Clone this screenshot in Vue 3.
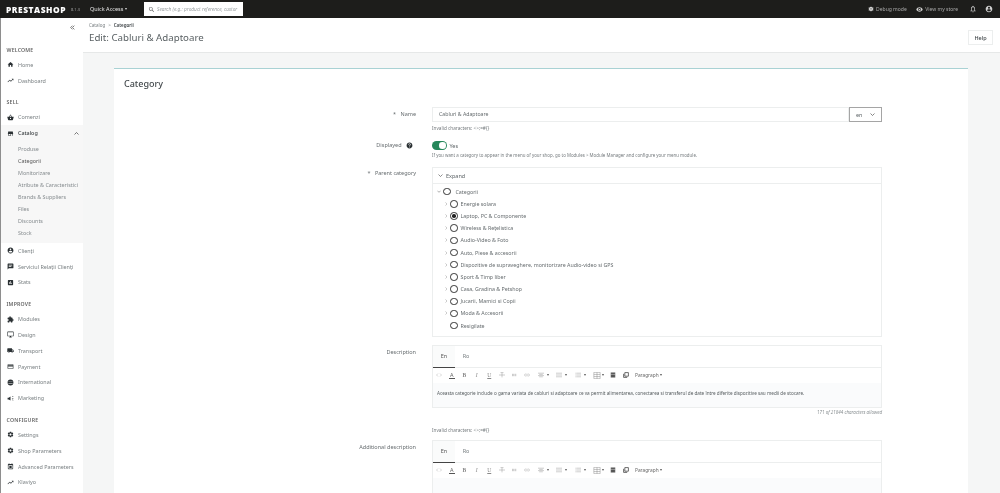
<script setup>
const P = {
  home: 'M10 20v-6h4v6h5v-8h3L12 3 2 12h3v8z',
  trend: 'M16 6l2.29 2.29-4.88 4.88-4-4L2 16.59 3.41 18l6-6 4 4 6.3-6.29L22 12V6z',
  basket: 'M17.21 9l-4.38-6.56c-.19-.28-.51-.42-.83-.42-.32 0-.64.14-.83.43L6.79 9H2c-.55 0-1 .45-1 1 0 .09.01.18.04.27l2.54 9.27c.23.84 1 1.46 1.92 1.46h13c.92 0 1.69-.62 1.93-1.46l2.54-9.27L23 10c0-.55-.45-1-1-1h-4.79zM9 9l3-4.4L15 9H9zm3 8c-1.1 0-2-.9-2-2s.9-2 2-2 2 .9 2 2-.9 2-2 2z',
  store: 'M20 4H4v2h16V4zm1 10v-2l-1-5H4l-1 5v2h1v6h10v-6h4v6h2v-6h1zm-9 4H6v-4h6v4z',
  account: 'M12 2C6.48 2 2 6.48 2 12s4.48 10 10 10 10-4.48 10-10S17.52 2 12 2zm0 3c1.66 0 3 1.34 3 3s-1.34 3-3 3-3-1.34-3-3 1.34-3 3-3zm0 14.2c-2.5 0-4.71-1.28-6-3.22.03-1.99 4-3.08 6-3.08 1.99 0 5.97 1.09 6 3.08-1.29 1.94-3.5 3.22-6 3.22z',
  chat: 'M20 2H4c-1.1 0-1.99.9-1.99 2L2 22l4-4h14c1.1 0 2-.9 2-2V4c0-1.1-.9-2-2-2zM6 9h12v2H6V9zm8 5H6v-2h8v2zm4-6H6V6h12v2z',
  stats: 'M19 3H5c-1.1 0-2 .9-2 2v14c0 1.1.9 2 2 2h14c1.1 0 2-.9 2-2V5c0-1.1-.9-2-2-2zM9 17H7v-7h2v7zm4 0h-2V7h2v10zm4 0h-2v-4h2v4z',
  puzzle: 'M20.5 11H19V7c0-1.1-.9-2-2-2h-4V3.5C13 2.12 11.88 1 10.5 1S8 2.12 8 3.5V5H4c-1.1 0-1.99.9-1.99 2v3.8H3.5c1.49 0 2.7 1.21 2.7 2.7s-1.21 2.7-2.7 2.7H2V20c0 1.1.9 2 2 2h3.8v-1.5c0-1.49 1.21-2.7 2.7-2.7 1.49 0 2.7 1.21 2.7 2.7V22H17c1.1 0 2-.9 2-2v-4h1.5c1.38 0 2.5-1.12 2.5-2.5S21.88 11 20.5 11z',
  desktop: 'M21 2H3c-1.1 0-2 .9-2 2v12c0 1.1.9 2 2 2h7v2H8v2h8v-2h-2v-2h7c1.1 0 2-.9 2-2V4c0-1.1-.9-2-2-2zm0 14H3V4h18v12z',
  truck: 'M20 8h-3V4H3c-1.1 0-2 .9-2 2v11h2c0 1.66 1.34 3 3 3s3-1.34 3-3h6c0 1.66 1.34 3 3 3s3-1.34 3-3h2v-5l-3-4zM6 18.5c-.83 0-1.5-.67-1.5-1.5s.67-1.5 1.5-1.5 1.5.67 1.5 1.5-.67 1.5-1.5 1.5zm13.5-9l1.96 2.5H17V9.5h2.5zm-1.5 9c-.83 0-1.5-.67-1.5-1.5s.67-1.5 1.5-1.5 1.5.67 1.5 1.5-.67 1.5-1.5 1.5z',
  card: 'M20 4H4c-1.11 0-1.99.89-1.99 2L2 18c0 1.11.89 2 2 2h16c1.11 0 2-.89 2-2V6c0-1.11-.89-2-2-2zm0 14H4v-6h16v6zm0-10H4V6h16v2z',
  globe: 'M12 2a10 10 0 1 0 0 20 10 10 0 0 0 0-20zM4.6 9h14.8v1.5H4.6V9zm0 4.5h14.8V15H4.6v-1.5z',
  megaphone: 'M2 9v6h4l6 4V5L6 9H2zm15 2h5v2h-5v-2zm.5-5.5l3.5-2 1 1.7-3.5 2-1-1.7zm0 11.3l1-1.7 3.5 2-1 1.7-3.5-2z',
  gear: 'M19.14 12.94c.04-.3.06-.61.06-.94 0-.32-.02-.64-.07-.94l2.03-1.58c.18-.14.23-.41.12-.61l-1.92-3.32c-.12-.22-.37-.29-.59-.22l-2.39.96c-.5-.38-1.03-.7-1.62-.94l-.36-2.54c-.04-.24-.24-.41-.48-.41h-3.84c-.24 0-.43.17-.47.41l-.36 2.54c-.59.24-1.13.57-1.62.94l-2.39-.96c-.22-.08-.47 0-.59.22L2.74 8.87c-.12.21-.08.47.12.61l2.03 1.58c-.05.3-.09.63-.09.94s.02.64.07.94l-2.03 1.58c-.18.14-.23.41-.12.61l1.92 3.32c.12.22.37.29.59.22l2.39-.96c.5.38 1.03.7 1.62.94l.36 2.54c.05.24.24.41.48.41h3.84c.24 0 .44-.17.47-.41l.36-2.54c.59-.24 1.13-.56 1.62-.94l2.39.96c.22.08.47 0 .59-.22l1.92-3.32c.12-.22.07-.47-.12-.61l-2.01-1.58zM12 15.6c-1.98 0-3.6-1.62-3.6-3.6s1.62-3.6 3.6-3.6 3.6 1.62 3.6 3.6-1.62 3.6-3.6 3.6z',
  chip: 'M19 3h-1V1h-2v2H8V1H6v2H5c-1.1 0-2 .9-2 2v14c0 1.1.9 2 2 2h14c1.1 0 2-.9 2-2V5c0-1.1-.9-2-2-2zm0 16H5V8h14v11zM8 10h8v7H8v-7z',
  help: 'M12 2C6.48 2 2 6.48 2 12s4.48 10 10 10 10-4.48 10-10S17.52 2 12 2zm1 17h-2v-2h2v2zm2.07-7.75l-.9.92C13.45 12.9 13 13.5 13 15h-2v-.5c0-1.1.45-2.1 1.17-2.83l1.24-1.26c.37-.36.59-.86.59-1.41 0-1.1-.9-2-2-2s-2 .9-2 2H8c0-2.21 1.79-4 4-4s4 1.79 4 4c0 .88-.36 1.68-.93 2.25z',
  bug: 'M12 3a8 8 0 0 0-7 4.2L3 6 2 7.5l2.3 1.4A8 8 0 0 0 4 11H1v2h3c0 .7.1 1.4.3 2L2 16.5 3 18l2-1.2A8 8 0 0 0 12 21a8 8 0 0 0 7-4.2l2 1.2 1-1.5-2.3-1.5c.2-.6.3-1.3.3-2h3v-2h-3c0-.7-.1-1.4-.3-2.1L22 7.5 21 6l-2 1.2A8 8 0 0 0 12 3zm-1 5h2v5h-2V8zm0 7h2v2h-2v-2z',
  eye: 'M12 4.5C7 4.5 2.73 7.61 1 12c1.73 4.39 6 7.5 11 7.5s9.27-3.11 11-7.5c-1.73-4.39-6-7.5-11-7.5zM12 17c-2.76 0-5-2.24-5-5s2.24-5 5-5 5 2.24 5 5-2.24 5-5 5zm0-8c-1.66 0-3 1.34-3 3s1.34 3 3 3 3-1.34 3-3-1.34-3-3-3z',
  bell: 'M12 22c1.1 0 2-.9 2-2h-4c0 1.1.9 2 2 2zm6-6v-5c0-3.07-1.63-5.64-4.5-6.32V4c0-.83-.67-1.5-1.5-1.5s-1.5.67-1.5 1.5v.68C7.64 5.36 6 7.92 6 11v5l-2 2v1h16v-1l-2-2zm-2 1H8v-6c0-2.48 1.51-4.5 4-4.5s4 2.02 4 4.5v6z',
  search: 'M15.5 14h-.79l-.28-.27A6.47 6.47 0 0 0 16 9.5 6.5 6.5 0 1 0 9.5 16c1.61 0 3.09-.59 4.23-1.57l.27.28v.79l5 4.99L20.49 19l-4.99-5zm-6 0C7.01 14 5 11.99 5 9.5S7.01 5 9.5 5 14 7.01 14 9.5 11.99 14 9.5 14z'
}
const nav = [
  { title: 'WELCOME', first: true, items: [{ i: 'home', t: 'Home' }, { i: 'trend', t: 'Dashboard' }] },
  { title: 'SELL', items: [
    { i: 'basket', t: 'Comenzi' },
    { i: 'store', t: 'Catalog', open: true, sub: ['Produse', 'Categorii', 'Monitorizare', 'Atribute & Caracteristici', 'Brands & Suppliers', 'Files', 'Discounts', 'Stock'] },
    { i: 'account', t: 'Clienți' }, { i: 'chat', t: 'Serviciul Relații Clienți' }, { i: 'stats', t: 'Stats' }] },
  { title: 'IMPROVE', items: [{ i: 'puzzle', t: 'Modules' }, { i: 'desktop', t: 'Design' }, { i: 'truck', t: 'Transport' }, { i: 'card', t: 'Payment' }, { i: 'globe', t: 'International' }, { i: 'megaphone', t: 'Marketing' }] },
  { title: 'CONFIGURE', items: [{ i: 'gear', t: 'Settings' }, { i: 'gear', t: 'Shop Parameters' }, { i: 'chip', t: 'Advanced Parameters' }, { i: 'trend', t: 'Klaviyo' }] }
]
const tree = [
  { t: 'Energie solara', c: true }, { t: 'Laptop, PC & Componente', c: true, on: true }, { t: 'Wireless & Rețelistica', c: true },
  { t: 'Audio-Video & Foto', c: true }, { t: 'Auto, Piese & accesorii', c: true },
  { t: 'Dispozitive de supraveghere, monitorizare Audio-video si GPS', c: true }, { t: 'Sport & Timp liber', c: true },
  { t: 'Casa, Gradina & Petshop', c: true }, { t: 'Jucarii, Mamici si Copii', c: true }, { t: 'Moda & Accesorii', c: true }, { t: 'Resigilate', c: false }
]
const tools = [
  { vb: '0 0 12 8', d: 'M4 1L1 4l3 3M8 1l3 3-3 3' },
  { label: 'A', cls: 'under' },
  { label: 'B', cls: 'bold' },
  { label: 'I', cls: 'ital' },
  { label: 'U', cls: 'und' },
  { vb: '0 0 10 10', d: 'M0 5h10M5 1v8M2.5 1h5' },
  { vb: '0 0 10 8', d: 'M2.5 2v4M4 2v4M6.5 2v4M8 2v4' },
  { vb: '0 0 12 8', d: 'M5 2H3a2 2 0 0 0 0 4h2M7 2h2a2 2 0 0 1 0 4H7M4 4h4' },
  { vb: '0 0 10 8', d: 'M0 1h10M2 3h6M0 5h10M2 7h6', caret: true },
  { vb: '0 0 10 8', d: 'M0 1h10M0 4h10M0 7h10', caret: true },
  { vb: '0 0 10 8', d: 'M2 1h8M2 4h8M2 7h8M0 1h1M0 4h1M0 7h1', caret: true },
  { vb: '0 0 10 10', d: 'M.5.5h9v9h-9zM.5 3.5h9M.5 6.5h9M5 .5v9', caret: true, wide: true },
  { vb: '0 0 10 10', d: 'M2 .5h6a1 1 0 0 1 1 1v7a1 1 0 0 1-1 1H2a1 1 0 0 1-1-1v-7a1 1 0 0 1 1-1zM1 4h8', solid: true },
  { vb: '0 0 10 10', d: 'M3 1h6v6H3zM1 3v6h6', media: true }
]
const editors = ['desc', 'add']
</script>

<template>
  <div class="page">
    <header class="top">
      <span class="logo">PRESTASHOP</span>
      <span class="ver">8.1.3</span>
      <span class="quick">Quick Access <i class="caret light"></i></span>
      <div class="search">
        <svg viewBox="0 0 24 24" class="sico"><path :d="P.search" /></svg>
        <span>Search (e.g.: product reference, custor</span>
      </div>
      <div class="top-right">
        <span class="tlink"><svg viewBox="0 0 24 24" class="tico"><path :d="P.bug" /></svg>Debug mode</span>
        <span class="tlink"><svg viewBox="0 0 24 24" class="tico eye"><path :d="P.eye" /></svg>View my store</span>
        <svg viewBox="0 0 24 24" class="tico bell"><path :d="P.bell" /></svg>
        <svg viewBox="0 0 24 24" class="tico user"><path :d="P.account" /></svg>
      </div>
    </header>
    <div class="body">
      <aside class="side">
        <div class="collapse"><svg viewBox="0 0 8 8"><path d="M4 1L1 4l3 3M7 1L4 4l3 3" /></svg></div>
        <section v-for="g in nav" :key="g.title" class="group" :class="{ first: g.first }">
          <div class="gtitle">{{ g.title }}</div>
          <template v-for="it in g.items" :key="it.t">
            <div class="item" :class="{ open: it.open }">
              <svg viewBox="0 0 24 24" class="nico"><path :d="P[it.i]" /></svg>
              <span>{{ it.t }}</span>
              <svg v-if="it.open" viewBox="0 0 10 6" class="up"><path d="M1 5l4-4 4 4" /></svg>
            </div>
            <div v-if="it.sub" class="sub">
              <div v-for="s in it.sub" :key="s" class="subitem" :class="{ cur: s === 'Categorii' }">{{ s }}</div>
            </div>
          </template>
        </section>
      </aside>
      <main class="main">
        <div class="head">
          <div class="crumb"><span>Catalog</span><span class="gt">&gt;</span><b>Categorii</b></div>
          <div class="headrow">
            <h1>Edit: Cabluri &amp; Adaptoare</h1>
            <button class="help">Help</button>
          </div>
        </div>
        <div class="content">
          <section class="card">
            <h2>Category</h2>
            <div class="row name-row">
              <label><em>*</em> Name</label>
              <div>
                <div class="inline">
                  <div class="input">Cabluri &amp; Adaptoare</div>
                  <div class="lang">en <svg viewBox="0 0 10 6"><path d="M1 1l4 4 4-4" /></svg></div>
                </div>
                <small class="hint">Invalid characters: &lt;&gt;;=#{}</small>
              </div>
            </div>
            <div class="row disp-row">
              <label>Displayed <svg viewBox="0 0 24 24" class="qm"><path :d="P.help" /></svg></label>
              <div>
                <div class="switchline"><span class="switch"><i></i></span><span>Yes</span></div>
                <small class="hint long">If you want a category to appear in the menu of your shop, go to Modules &gt; Module Manager and configure your menu module.</small>
              </div>
            </div>
            <div class="row parent-row">
              <label><em>*</em> Parent category</label>
              <div class="treebox">
                <div class="expand"><svg viewBox="0 0 10 6"><path d="M1 1l4 4 4-4" /></svg>Expand</div>
                <div class="node root"><svg viewBox="0 0 10 6" class="chev"><path d="M1 1l4 4 4-4" /></svg><span class="radio"></span>Categorii</div>
                <div v-for="n in tree" :key="n.t" class="node">
                  <svg viewBox="0 0 6 10" class="chev r" :class="{ hide: !n.c }"><path d="M1 1l4 4-4 4" /></svg>
                  <span class="radio" :class="{ on: n.on }"></span>{{ n.t }}
                </div>
              </div>
            </div>
            <div v-for="e in editors" :key="e" class="row" :class="e === 'desc' ? 'desc-row' : 'add-row'">
              <label>{{ e === 'desc' ? 'Description' : 'Additional description' }}</label>
              <div>
                <div class="editor">
                  <div class="tabs"><span class="tab active">En</span><span class="tab">Ro</span></div>
                  <div class="toolbar">
                    <span v-for="(t, n) in tools" :key="n" class="tool" :class="{ drop: t.caret, wide: t.wide }">
                      <span v-if="t.label" class="tbt" :class="t.cls">{{ t.label }}</span>
                      <svg v-else :viewBox="t.vb" class="tb" :class="{ solid: t.solid, media: t.media }"><path :d="t.d" /></svg>
                      <i v-if="t.caret" class="caret"></i>
                    </span>
                    <span class="para">Paragraph <i class="caret"></i></span>
                  </div>
                  <div v-if="e === 'desc'" class="text">Aceasta categorie include o gama variata de cabluri si adaptoare ce va permit alimentarea, conectarea si transferul de date între diferite dispozitive sau medii de stocare.</div>
                  <div v-else class="text empty"></div>
                </div>
                <template v-if="e === 'desc'">
                  <div class="count">171 of 21844 characters allowed</div>
                  <small class="hint inv">Invalid characters: &lt;&gt;;=#{}</small>
                </template>
              </div>
            </div>
          </section>
        </div>
      </main>
    </div>
  </div>
</template>

<style>
html, body { margin: 0; padding: 0; overflow: hidden; background: #f5f6f6; }
</style>

<style scoped>
* { box-sizing: border-box; }
.page { width: 1000px; height: 493px; overflow: hidden; display: flex; flex-direction: column; font-family: "Noto Sans", "Open Sans", sans-serif; font-size: 5.5px; color: #5d6467; filter: blur(.25px); }
.top { height: 18px; flex: none; background: #1d1d1b; color: #d8d8d8; display: flex; align-items: center; padding-left: 6px; }
.logo { font: 800 8.4px "Open Sans", sans-serif; color: #fff; letter-spacing: .55px; width: 65px; white-space: nowrap; }
.ver { font-size: 4px; color: #9a9a9a; width: 19px; }
.quick { font-size: 5.5px; color: #e6e6e6; width: 54px; display: flex; align-items: center; gap: 2px; }
.caret { display: inline-block; flex: none; width: 0; height: 0; border: 1.5px solid transparent; border-top: 2px solid #555; border-bottom: 0; }
.caret.light { border-top-color: #ddd; }
.search { width: 99px; height: 14px; background: #fff; display: flex; align-items: center; padding-left: 4px; gap: 2px; font-style: italic; font-size: 4.8px; color: #9aa0a2; white-space: nowrap; }
.sico { width: 7px; height: 7px; flex: none; fill: #555; }
.top-right { margin-left: auto; display: flex; align-items: center; color: #a9a9a9; padding-right: 7px; }
.tlink { display: flex; align-items: center; gap: 2.5px; font-size: 5px; margin-right: 9px; }
.tico { width: 6px; height: 6px; fill: #cfcfcf; flex: none; }
.tico.eye { width: 7px; height: 7px; }
.bell { width: 8px; height: 8px; margin-right: 8px; margin-left: 2px; }
.user { width: 8px; height: 8px; }
.body { flex: 1; display: flex; min-height: 0; }
.side { width: 83px; flex: none; background: #fff; border-left: 1px solid #8e8e8e; font-size: 5.4px; color: #7a8083; }
.collapse { height: 14px; display: flex; justify-content: flex-end; align-items: center; padding-right: 8px; padding-top: 4px; }
.collapse svg { width: 5px; height: 5px; fill: none; stroke: #555; stroke-width: 1.2; }
.group { padding-top: 8.5px; }
.group.first { padding-top: 12.5px; }
.gtitle { height: 11px; line-height: 11px; margin-bottom: 1.5px; padding-left: 5.5px; font-weight: 600; font-size: 5.2px; letter-spacing: .2px; color: #666; }
.item { height: 15.8px; display: flex; align-items: center; padding-left: 6px; gap: 4px; white-space: nowrap; }
.nico { width: 7px; height: 7px; fill: #2a3033; flex: none; }
.item.open { background: #f7f7f7; color: #3a3f42; font-weight: 500; }
.up { width: 5px; height: 3px; margin-left: auto; margin-right: 4px; fill: none; stroke: #333; stroke-width: 1.3; }
.sub { background: #f7f7f7; padding-top: 1.4px; height: 101.7px; }
.subitem { height: 12px; line-height: 12px; padding-left: 17px; white-space: nowrap; color: #868c8f; }
.subitem.cur { color: #555; }
.main { flex: 1; min-width: 0; display: flex; flex-direction: column; }
.head { height: 35px; flex: none; background: #fff; border-bottom: 1px solid #e6e8e8; padding: 3.5px 7px 0 6px; }
.crumb { font-size: 4.5px; color: #7a8083; display: flex; gap: 3px; align-items: center; height: 6px; }
.crumb b { color: #3f4548; font-weight: 600; }
.headrow { display: flex; justify-content: space-between; align-items: center; margin-top: 2.5px; }
h1 { margin: 0; font-size: 9.7px; font-weight: 400; color: #5a6164; }
.help { width: 25px; height: 15px; background: #fff; border: 1px solid #eceeee; font: 500 5.5px "Noto Sans", sans-serif; color: #3f4548; padding: 0; }
.content { flex: 1; min-height: 0; padding: 15px 32px 0 31px; background: #f5f6f6; }
.card { height: 100%; background: #fff; border-top: 1px solid #a9d2d4; }
h2 { margin: 0; height: 38px; padding: 9px 0 0 10px; font-size: 9px; font-weight: 500; color: #454b4e; line-height: 12px; }
.row { display: grid; grid-template-columns: 302px 450px; column-gap: 16px; }
label { text-align: right; font-size: 5.5px; color: #666c6f; display: block; line-height: 15px; }
label em { font-style: normal; margin-right: 3px; }
.inline { display: flex; height: 15px; }
.input { flex: 1; border: 1px solid #eceeee; line-height: 13px; padding-left: 6px; color: #666c6f; font-size: 5.2px; }
.lang { width: 33px; border: 1px solid #a5a5a5; display: flex; align-items: center; justify-content: space-between; padding: 0 6px; }
.lang svg { width: 5px; height: 3px; fill: none; stroke: #444; stroke-width: 1.3; }
.hint { display: block; font-size: 4.7px; color: #757b7e; line-height: 8px; margin-top: 2px; white-space: nowrap; }
.hint.long { font-size: 4.43px; margin-top: 0; }
.disp-row { margin-top: 8px; }
.switchline { height: 11px; display: flex; align-items: center; gap: 3px; }
.switch { width: 14.5px; height: 8.5px; background: #25875a; border-radius: 5px; position: relative; display: block; }
.switch i { position: absolute; right: 1px; top: 1px; width: 6.5px; height: 6.5px; border-radius: 50%; background: #fff; }
.qm { width: 7px; height: 7px; fill: #2a3033; vertical-align: -1.5px; margin-left: 3px; margin-right: 3px; }
.disp-row label { line-height: 11px; }
.parent-row { margin-top: 8px; }
.parent-row label { line-height: 13px; }
.treebox { height: 170px; border: 1px solid #eceeee; }
.expand { height: 16px; border-bottom: 1px solid #eceeee; display: flex; align-items: center; padding-left: 5px; gap: 3px; }
.expand svg { width: 5px; height: 3px; fill: none; stroke: #444; stroke-width: 1.2; }
.node { height: 12.2px; display: flex; align-items: center; gap: 3px; padding-left: 11.5px; white-space: nowrap; color: #666c6f; font-size: 5.3px; }
.root { margin-top: 1.5px; padding-left: 4px; gap: 2px; }
.root .chev { width: 4px; height: 3px; fill: none; stroke: #555; stroke-width: 1.2; }
.root .radio { margin-right: 3px; }
.chev.r { width: 2.5px; height: 4px; fill: none; stroke: #777; stroke-width: 1; }
.chev.hide { visibility: hidden; }
.radio { width: 7.5px; height: 7.5px; border: 1px solid #333; border-radius: 50%; flex: none; background: #fff; position: relative; }
.radio.on::after { content: ""; position: absolute; inset: 1px; background: #222; border-radius: 50%; }
.desc-row { margin-top: 7.5px; }
.desc-row label, .add-row label { line-height: 14px; }
.editor { border: 1px solid #eceeee; }
.tabs { height: 22px; display: flex; border-bottom: 1px solid #eceeee; }
.tab { width: 22px; text-align: center; line-height: 21px; color: #7a8083; }
.tab.active { background: #fafbfb; border-bottom: 1px solid #444; height: 22px; color: #555; }
.toolbar { height: 15px; display: flex; align-items: center; padding-left: 0; color: #888; font-size: 5.5px; }
.tool { width: 12.5px; flex: none; display: flex; align-items: center; justify-content: center; }
.tool.drop { width: 18.5px; justify-content: flex-start; padding-left: 4.5px; gap: 3px; }
.tool.wide { gap: 1.5px; padding-left: 4px; }
.tb { width: 6px; height: 6px; fill: none; stroke: #8a8a8a; stroke-width: .7; flex: none; }
.wide .tb { width: 8px; height: 7px; }
.tb.solid { fill: #555; stroke: #fff; stroke-width: .7; }
.tb.media { stroke: #444; stroke-width: 1.3; }
.tbt { font-family: "Liberation Serif", serif; }
.bold { font-weight: 700; }
.ital { font-style: italic; }
.und { text-decoration: underline; }
.under { border-bottom: 1px solid #555; line-height: 6px; font-family: "Noto Sans", sans-serif; color: #666; padding: 0 1px; }
.para { font-size: 4.8px; color: #666; display: inline-flex; align-items: center; gap: 1.5px; margin-left: 3px; white-space: nowrap; }
.text { background: #fafbfc; height: 24px; padding: 6px 4px; font-size: 4.65px; color: #555b5e; white-space: nowrap; line-height: 8px; }
.text.empty { height: 60px; }
.count { text-align: right; font-style: italic; font-size: 4.5px; color: #8a9093; line-height: 8px; }
.hint.inv { margin-top: 10px; }
.add-row { margin-top: 6px; }
</style>
